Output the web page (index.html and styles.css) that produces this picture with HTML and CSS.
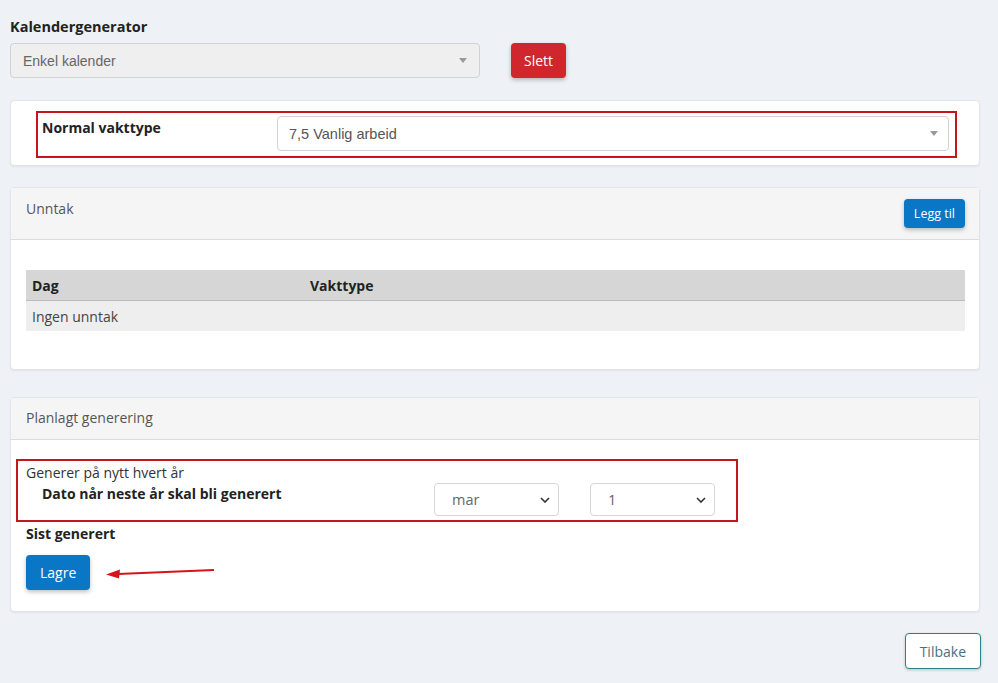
FILE: index.html
```html
<!DOCTYPE html>
<html lang="no">
<head>
    <meta charset="UTF-8">
    <meta name="viewport" content="width=device-width, initial-scale=1.0">
    <title>Kalendergenerator</title>
    <link rel="stylesheet" href="styles.css">
</head>
<body>
    <div class="page">
        <h4 class="page-title">Kalendergenerator</h4>
        <div class="top-row">
            <div class="fake-select top-select">
                <span>Enkel kalender</span>
                <span class="caret"></span>
            </div>
            <button class="btn btn-danger">Slett</button>
        </div>

        <div class="card card-normal">
            <div class="mark mark-normal">
                <label class="field-label">Normal vakttype</label>
                <div class="fake-select wide-select">
                    <span>7,5 Vanlig arbeid</span>
                    <span class="caret"></span>
                </div>
            </div>
        </div>

        <div class="card card-exceptions">
            <div class="card-header">
                <span>Unntak</span>
                <button class="btn btn-primary btn-small">Legg til</button>
            </div>
            <div class="card-body body-table">
                <table class="exceptions">
                    <thead>
                        <tr><th class="col-day">Dag</th><th>Vakttype</th></tr>
                    </thead>
                    <tbody>
                        <tr><td colspan="2">Ingen unntak</td></tr>
                    </tbody>
                </table>
            </div>
        </div>

        <div class="card">
            <div class="card-header header-plain">
                <span>Planlagt generering</span>
            </div>
            <div class="card-body body-plan">
                <div class="mark mark-plan">
                    <div class="plan-text">
                        <div class="repeat-label">Generer på nytt hvert år</div>
                        <div class="field-label date-label">Dato når neste år skal bli generert</div>
                    </div>
                    <div class="date-selects">
                        <div class="native-select"><span>mar</span><svg width="10" height="6" viewBox="0 0 10 6"><path d="M1 1l4 4 4-4" fill="none" stroke="#333" stroke-width="1.6"/></svg></div>
                        <div class="native-select"><span>1</span><svg width="10" height="6" viewBox="0 0 10 6"><path d="M1 1l4 4 4-4" fill="none" stroke="#333" stroke-width="1.6"/></svg></div>
                    </div>
                </div>
                <div class="field-label last-label">Sist generert</div>
                <div class="save-row">
                    <button class="btn btn-primary">Lagre</button>
                    <svg class="arrow" width="112" height="12" viewBox="0 0 112 12">
                        <path d="M110 2 L14 6" stroke="#d7141a" stroke-width="2" fill="none"/>
                        <path d="M2 6.5 L16 1.5 L15 10.5 Z" fill="#d7141a"/>
                    </svg>
                </div>
            </div>
        </div>

        <div class="footer-row">
            <button class="btn btn-outline">Tilbake</button>
        </div>
    </div>
</body>
</html>
```

FILE: styles.css
```css
body {
    margin: 0;
    background-color: #eef1f5;
    font-family: "Open Sans", Arial, sans-serif;
    font-size: 14px;
    color: #333;
}
.page {
    padding: 17px 17px 16px 10px;
}
.page-title {
    margin: 0 0 6px 0;
    font-size: 14.5px;
    font-weight: bold;
    color: #222;
    line-height: 20px;
}
.top-row {
    display: flex;
    align-items: center;
    gap: 31px;
    margin-bottom: 22px;
}
.fake-select {
    display: flex;
    align-items: center;
    justify-content: space-between;
    box-sizing: border-box;
    height: 35px;
    border: 1px solid #d2d2d2;
    border-radius: 4px;
    font-family: "Liberation Sans", Arial, sans-serif;
    font-size: 14px;
    color: #555;
}
.top-select {
    width: 470px;
    padding: 0 12px 0 12px;
    background-color: #efefef;
    color: #666;
}
.caret {
    width: 0;
    height: 0;
    border-left: 4px solid transparent;
    border-right: 4px solid transparent;
    border-top: 5px solid #999;
}
.btn {
    font-family: "Open Sans", Arial, sans-serif;
    font-size: 14px;
    border: none;
    border-radius: 4px;
    cursor: pointer;
    box-shadow: 0 2px 4px rgba(0, 0, 0, 0.25);
}
.btn-danger {
    height: 35px;
    padding: 0 13px;
    background-color: #d0272e;
    color: #fff;
}
.btn-primary {
    height: 34px;
    padding: 0 13px;
    background-color: #0a76c6;
    color: #fff;
}
.btn-small {
    height: 29px;
    padding: 0 10px;
    font-size: 12.5px;
}
.btn-outline {
    height: 36px;
    padding: 0 14px;
    background-color: #fff;
    border: 1px solid #2f7f86;
    color: #4d6f7d;
    box-shadow: 0 1px 3px rgba(0, 0, 0, 0.2);
}
.card {
    width: 970px;
    box-sizing: border-box;
    background-color: #fff;
    border: 1px solid #e1e4e8;
    border-radius: 4px;
    margin-bottom: 21px;
    box-shadow: 0 1px 2px rgba(0, 0, 0, 0.06);
}
.card-normal {
    padding: 10px 22px 7px 25px;
}
.card-exceptions {
    margin-bottom: 27px;
}
.mark {
    border: 2px solid #c4161c;
    box-sizing: border-box;
}
.mark-normal {
    display: flex;
    align-items: flex-start;
    height: 47px;
    padding: 3px 6px 0 4px;
}
.field-label {
    font-weight: bold;
    color: #222;
    font-size: 14px;
}
.mark-normal .field-label {
    width: 235px;
    line-height: 20px;
    padding-top: 2px;
}
.wide-select {
    flex: 1;
    padding: 0 10px 0 11px;
    background-color: #fff;
    color: #555;
    font-size: 14.5px;
}
.card-header {
    display: flex;
    justify-content: space-between;
    align-items: flex-start;
    height: 52px;
    padding: 11px 14px 0 15px;
    box-sizing: border-box;
    background-color: #f5f5f5;
    border-bottom: 1px solid #dcdcdc;
    color: #555;
    font-size: 14px;
    line-height: 20px;
}
.header-plain {
    height: 42px;
    padding-top: 10px;
}
.body-table {
    padding: 30px 14px 38px 15px;
}
.exceptions {
    width: 100%;
    border-collapse: collapse;
}
.exceptions th {
    height: 30px;
    padding: 0 6px;
    text-align: left;
    background-color: #d6d6d6;
    border-bottom: 1px solid #bdbdbd;
    color: #222;
    font-weight: bold;
}
.exceptions th.col-day {
    width: 266px;
}
.exceptions td {
    height: 30px;
    padding: 0 6px;
    background-color: #eeeeee;
    color: #444;
}
.body-plan {
    padding: 19px 15px 21px 5px;
}
.mark-plan {
    display: flex;
    justify-content: space-between;
    width: 722px;
    height: 63px;
    padding: 2px 21px 0 8px;
}
.plan-text {
    line-height: 20px;
}
.repeat-label {
    color: #333;
}
.date-label {
    padding-left: 16px;
    margin-top: 1px;
}
.date-selects {
    display: flex;
    gap: 31px;
    padding-top: 20px;
}
.native-select {
    display: flex;
    align-items: center;
    justify-content: space-between;
    box-sizing: border-box;
    width: 125px;
    height: 33px;
    padding: 0 8px 0 17px;
    border: 1px solid #d6d6d6;
    border-radius: 4px;
    background-color: #fff;
    color: #666;
    font-size: 14.5px;
}
.last-label {
    margin: 2px 0 11px 10px;
    line-height: 20px;
}
.save-row {
    display: flex;
    align-items: center;
    gap: 0;
    margin-left: 10px;
}
.save-row .btn {
    height: 35px;
    padding: 0 14px;
}
.arrow {
    margin-left: 14px;
    margin-top: 2px;
}
.footer-row {
    display: flex;
    justify-content: flex-end;
    padding-top: 0;
}
```
